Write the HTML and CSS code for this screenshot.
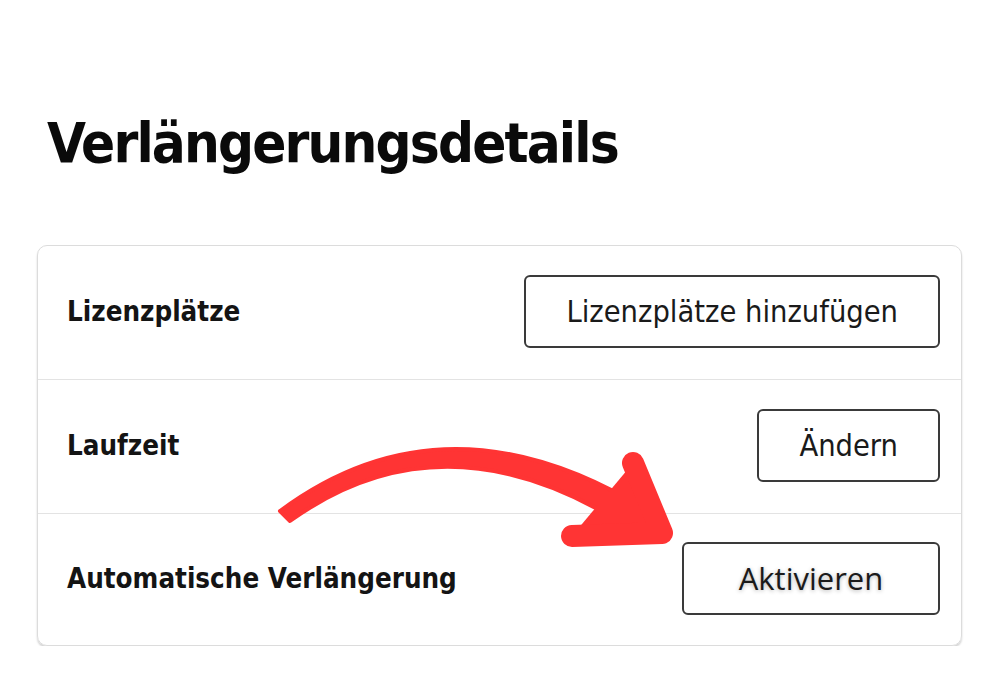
FILE: index.html
```html
<!DOCTYPE html>
<html lang="de">
<head>
  <meta charset="UTF-8">
  <title>Verlängerungsdetails</title>
  <link rel="stylesheet" href="styles.css">
</head>
<body>
<div class="page">
  <h1>Verlängerungsdetails</h1>

  <div class="card">
    <div class="row">
      <span class="label">Lizenzplätze</span>
      <button class="btn">Lizenzplätze hinzufügen</button>
    </div>
    <div class="row">
      <span class="label">Laufzeit</span>
      <button class="btn">Ändern</button>
    </div>
    <div class="row">
      <span class="label">Automatische Verlängerung</span>
      <button class="btn btn-activate">Aktivieren</button>
    </div>

    <!-- Hinweis-Pfeil -->
    <svg class="arrow" width="1000" height="700" viewBox="0 0 1000 700">
      <path d="M280 511 Q450 385 655 515 L640 535 Q450 406 290 521 Z"
            fill="#ff3434" stroke="#ff3434" stroke-width="4" stroke-linejoin="round"/>
      <polyline points="633,463 662,533 572,536" fill="#ff3434"
                stroke="#ff3434" stroke-width="22" stroke-linejoin="round" stroke-linecap="round"/>
    </svg>
  </div>
</div>
</body>
</html>
```

FILE: styles.css
```css
* { box-sizing: border-box; }
body {
  margin: 0;
  background-color: white;
  font-family: 'DejaVu Sans', sans-serif;
  font-stretch: condensed;
  color: #111;
}
.page {
  position: relative;
  padding: 107px 38px 0 37px;
}
h1 {
  margin: 0 0 66px 10px;
  font-size: 56px;
  font-weight: bold;
  letter-spacing: -1.85px;
  line-height: 72px;
  color: #0a0a0a;
}
.card {
  border: 1px solid #dcdcdc;
  border-radius: 10px;
  box-shadow: 0 2px 2px rgba(0, 0, 0, 0.18);
}
.row {
  display: flex;
  justify-content: space-between;
  align-items: center;
  height: 134px;
  padding: 0 21px 3px 29px;
  border-bottom: 1px solid #e3e3e3;
}
.row:last-of-type {
  border-bottom: none;
  height: 131px;
}
.label {
  font-size: 27.5px;
  font-weight: bold;
  color: #141414;
}
.btn {
  height: 73px;
  padding: 0 40px;
  background: white;
  border: 2px solid #3a3a3a;
  border-radius: 6px;
  font-family: 'DejaVu Sans', sans-serif;
  font-stretch: condensed;
  font-size: 30.5px;
  color: #1a1a1a;
  cursor: pointer;
}
.btn-activate {
  width: 258px;
  font-family: 'Open Sans', sans-serif;
  font-stretch: normal;
  font-size: 31px;
  text-shadow: 0 1px 4px rgba(0, 0, 0, 0.3);
}
.arrow {
  position: absolute;
  left: 0;
  top: 0;
  pointer-events: none;
}
```
